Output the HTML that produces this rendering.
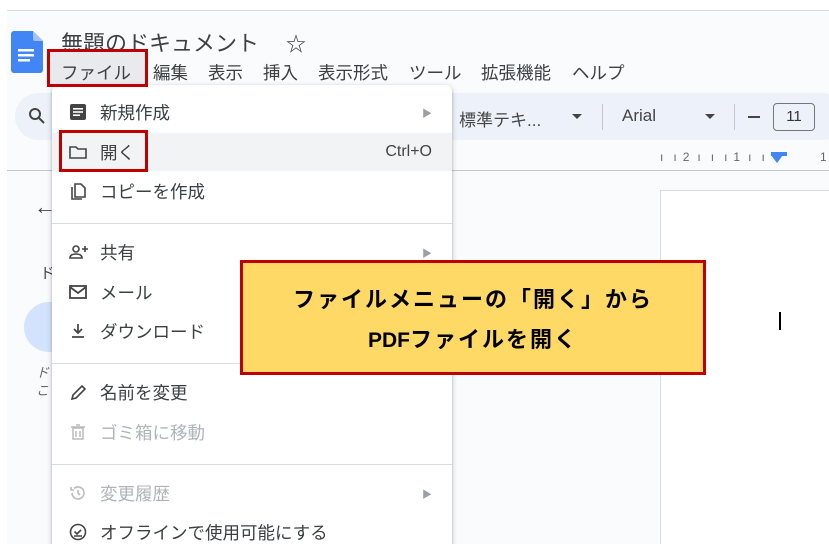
<!DOCTYPE html>
<html style="width:829px;height:544px;overflow:hidden"><head><meta charset="utf-8"><style>
*{margin:0;padding:0;box-sizing:border-box}
body{width:829px;height:544px;overflow:hidden;background:#fff;font-family:"Liberation Sans","Noto Sans CJK JP",sans-serif;position:relative;color:#202124}
.a{position:absolute}
.app{left:7px;top:10px;right:0;bottom:0;background:#f9fbfd;border-top:1px solid #dadce0}
.menu{left:52px;top:85px;width:400px;height:470px;background:#fff;border-radius:6px;box-shadow:0 2px 6px rgba(60,64,67,.3),0 1px 2px rgba(60,64,67,.2)}
.it{position:absolute;left:0;width:400px;height:38px;font-size:17.5px;display:flex;align-items:center;padding-left:48px;color:#3c4043}
.it svg{position:absolute;left:16px;top:9px}
.dis{color:#b0b3b8}
.arr{position:absolute;right:20px;font-size:10px;color:#9aa0a6}
.div{position:absolute;left:0;width:400px;height:1px;background:#dadce0}
.mb{font-size:17.5px;color:#3c4043;top:60px}
</style></head><body>
<div class="a app"></div>
<svg class="a" style="left:11px;top:31px" width="32" height="42" viewBox="0 0 32 42"><path d="M3 0h19l10 10v29a3 3 0 0 1-3 3H3a3 3 0 0 1-3-3V3a3 3 0 0 1 3-3z" fill="#4285f4"/><path d="M22 0l10 10h-8a2 2 0 0 1-2-2z" fill="#a1c2fa"/><rect x="7" y="18" width="16" height="2.5" fill="#fff"/><rect x="7" y="23" width="16" height="2.5" fill="#fff"/><rect x="7" y="28" width="12" height="2.5" fill="#fff"/></svg>
<div class="a" style="left:61px;top:26px;font-size:22px;color:#3c4043">無題のドキュメント</div>
<div class="a" style="left:286px;top:28px;font-size:20px;color:#3c4043">☆</div>
<div class="a" style="left:49px;top:51px;width:96px;height:35px;background:#e8eaed;border-radius:4px"></div>
<div class="a mb" style="left:61px">ファイル</div>
<div class="a mb" style="left:153px">編集</div>
<div class="a mb" style="left:208px">表示</div>
<div class="a mb" style="left:263px">挿入</div>
<div class="a mb" style="left:318px">表示形式</div>
<div class="a mb" style="left:409px">ツール</div>
<div class="a mb" style="left:481px">拡張機能</div>
<div class="a mb" style="left:572px">ヘルプ</div>
<div class="a" style="left:15px;top:93px;width:830px;height:47px;background:#edf2fa;border-radius:24px"></div>
<svg class="a" style="left:28px;top:107px" width="18" height="18" viewBox="0 0 18 18"><circle cx="7" cy="7" r="5" fill="none" stroke="#444" stroke-width="2"/><path d="M11 11l5 5" stroke="#444" stroke-width="2"/></svg>
<div class="a" style="left:459px;top:106px;font-size:17px;color:#444">標準テキ...</div>
<div class="a" style="left:572px;top:114px;border:5px solid transparent;border-top:5px solid #444"></div>
<div class="a" style="left:602px;top:104px;width:1px;height:26px;background:#c7c7c7"></div>
<div class="a" style="left:622px;top:106px;font-size:17px;color:#444">Arial</div>
<div class="a" style="left:705px;top:114px;border:5px solid transparent;border-top:5px solid #444"></div>
<div class="a" style="left:734px;top:104px;width:1px;height:26px;background:#c7c7c7"></div>
<div class="a" style="left:748px;top:116px;width:12px;height:2px;background:#444"></div>
<div class="a" style="left:773px;top:103px;width:42px;height:28px;border:1px solid #747775;border-radius:4px;font-size:15px;text-align:center;line-height:26px;color:#333">11</div>
<div class="a" style="left:7px;top:170px;width:830px;height:1px;background:#c4c7c5"></div>
<div class="a" style="left:660px;top:150px;font-size:12px;color:#666;white-space:nowrap">ı<span style="margin-left:10px">ı</span><span style="margin-left:6px">2</span><span style="margin-left:8px">ı</span><span style="margin-left:10px">ı</span><span style="margin-left:10px">ı</span><span style="margin-left:6px">1</span><span style="margin-left:8px">ı</span><span style="margin-left:10px">ı</span></div>
<div class="a" style="left:771px;top:155px;border:6px solid transparent;border-top:8px solid #4285f4"></div>
<div class="a" style="left:771px;top:152px;width:16px;height:4px;background:#4285f4"></div>
<div class="a" style="left:820px;top:150px;font-size:12px;color:#666">1</div>
<div class="a" style="left:660px;top:190px;width:169px;height:354px;background:#fff;border:1px solid #dadce0;border-right:none;border-bottom:none"></div>
<div class="a" style="left:779px;top:312px;width:2px;height:18px;background:#000"></div>
<div class="a" style="left:34px;top:194px;font-size:22px;color:#444">←</div>
<div class="a" style="left:40px;top:262px;font-size:15px;color:#444">ド</div>
<div class="a" style="left:24px;top:302px;width:50px;height:50px;border-radius:50%;background:#d3e3fd"></div>
<div class="a" style="left:36px;top:364px;font-size:13px;color:#666;font-style:italic;line-height:18px">ド<br>こ</div>
<div class="a menu">
 <div class="it" style="top:8px"><svg width="20" height="20" viewBox="0 0 20 20"><rect x="2" y="2" width="16" height="16" rx="2" fill="#444"/><rect x="5" y="6" width="10" height="1.6" fill="#fff"/><rect x="5" y="9.2" width="10" height="1.6" fill="#fff"/><rect x="5" y="12.4" width="7" height="1.6" fill="#fff"/></svg>新規作成<span class="arr">▶</span></div>
 <div class="it" style="top:48px;background:#f1f3f4"><svg width="20" height="20" viewBox="0 0 20 20"><path d="M2 5h6l2 2h8v9H2z" fill="none" stroke="#444" stroke-width="1.6"/></svg>開く<span style="position:absolute;right:20px;font-size:16px;color:#444">Ctrl+O</span></div>
 <div class="it" style="top:87px"><svg width="20" height="20" viewBox="0 0 20 20"><path d="M7 3h6l4 4v9H7z M4 6v12h10" fill="none" stroke="#444" stroke-width="1.6"/></svg>コピーを作成</div>
 <div class="div" style="top:138px"></div>
 <div class="it" style="top:148px"><svg width="22" height="20" viewBox="0 0 22 20"><circle cx="8" cy="7" r="3" fill="none" stroke="#444" stroke-width="1.6"/><path d="M2 16c0-3 3-4 6-4s6 1 6 4z" fill="none" stroke="#444" stroke-width="1.6"/><path d="M17 4v6M14 7h6" stroke="#444" stroke-width="1.6"/></svg>共有<span class="arr">▶</span></div>
 <div class="it" style="top:188px"><svg width="20" height="20" viewBox="0 0 20 20"><rect x="2" y="4" width="16" height="12" fill="none" stroke="#444" stroke-width="1.8"/><path d="M2 5l8 6 8-6" fill="none" stroke="#444" stroke-width="1.8"/></svg>メール</div>
 <div class="it" style="top:227px"><svg width="20" height="20" viewBox="0 0 20 20"><path d="M10 3v9M6 8l4 4 4-4M4 16h12" fill="none" stroke="#444" stroke-width="1.7"/></svg>ダウンロード</div>
 <div class="div" style="top:278px"></div>
 <div class="it" style="top:288px"><svg width="20" height="20" viewBox="0 0 20 20"><path d="M4 17l1-4 9-9 3 3-9 9z" fill="none" stroke="#444" stroke-width="1.6"/></svg>名前を変更</div>
 <div class="it dis" style="top:328px"><svg width="20" height="20" viewBox="0 0 20 20"><path d="M5 6h10v11H5zM3 5h14M8 3h4M8 9v6M12 9v6" fill="none" stroke="#bbb" stroke-width="1.5"/></svg>ゴミ箱に移動</div>
 <div class="div" style="top:379px"></div>
 <div class="it dis" style="top:389px"><svg width="20" height="20" viewBox="0 0 20 20"><path d="M4 10a6 6 0 1 0 2-4.5M3 4v3h3M10 7v3l2 2" fill="none" stroke="#bbb" stroke-width="1.6"/></svg>変更履歴<span class="arr">▶</span></div>
 <div class="it" style="top:428px"><svg width="20" height="20" viewBox="0 0 20 20"><circle cx="10" cy="10" r="7.5" fill="none" stroke="#444" stroke-width="1.6"/><path d="M6.5 9.5l2.5 2.5 4-4M6 14h8" fill="none" stroke="#444" stroke-width="1.6"/></svg>オフラインで使用可能にする</div>
</div>
<div class="a" style="left:47px;top:49px;width:101px;height:38px;border:3px solid #c00000"></div>
<div class="a" style="left:59px;top:130px;width:89px;height:42px;border:3px solid #c00000"></div>
<div class="a" style="left:240px;top:260px;width:466px;height:115px;background:#ffd966;border:3px solid #c00000;text-align:center;font-weight:bold;font-size:22px;letter-spacing:2px;color:#000;line-height:40px;padding-top:17px;white-space:nowrap">ファイルメニューの「開く」から<br><span style="letter-spacing:0;font-size:21px">PDF</span>ファイルを開く</div>
</body></html>
